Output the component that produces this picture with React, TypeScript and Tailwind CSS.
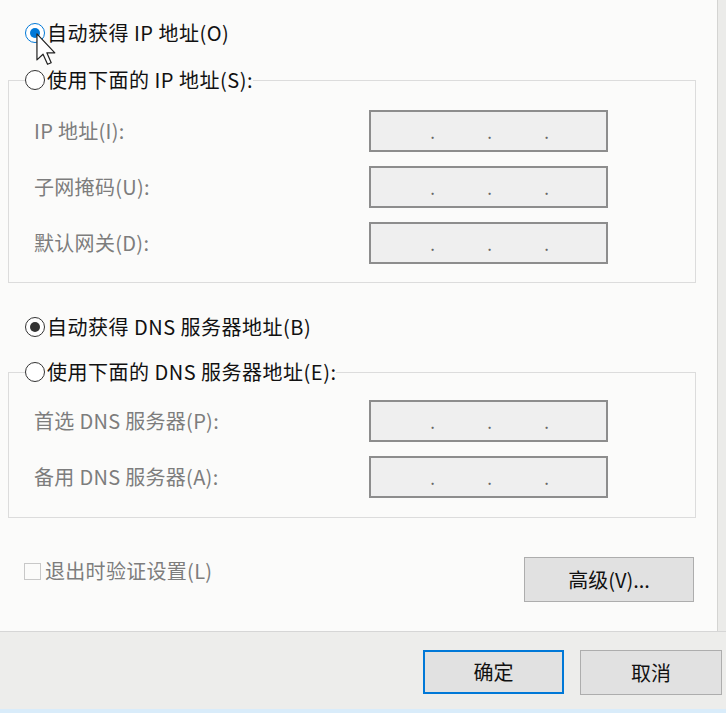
import React from 'react';

const font = { fontFamily: '"Noto Sans CJK SC", "Noto Sans", sans-serif' };

const Radio: React.FC<{ checked?: boolean; focus?: boolean }> = ({ checked, focus }) => {
  const ring = focus ? 'border-[#0078d7]' : 'border-[#333333]';
  const dot = focus ? 'bg-[#0078d7]' : 'bg-[#333333]';
  return (
    <span className={`flex h-[20px] w-[20px] shrink-0 items-center justify-center rounded-full border-[1.5px] bg-white ${ring}`}>
      {checked && <span className={`h-[10px] w-[10px] rounded-full ${dot}`} />}
    </span>
  );
};

const IpBox: React.FC = () => (
  <div className="h-[42px] w-[239px] border-2 border-[#8d8d8d] bg-[#efefef]">
    <div className="flex h-full items-center gap-[52px] pl-[59px] text-[17px] leading-none text-[#666]">
      <span className="w-[5px] text-center">.</span>
      <span className="w-[5px] text-center">.</span>
      <span className="w-[5px] text-center">.</span>
    </div>
  </div>
);

const Field: React.FC<{ label: string }> = ({ label }) => (
  <div className="flex items-center">
    <span className="w-[335px] text-[20px] tracking-[0.3px] text-[#7d7d7d]">{label}</span>
    <IpBox />
  </div>
);

const Cursor: React.FC = () => (
  <svg className="absolute left-[36px] top-[33px]" width="21" height="33" viewBox="0 0 12 19">
    <path d="M0.5 0.5 L0.5 15.5 L4 12.2 L6.6 18 L8.7 17.1 L6.2 11.4 L10.8 11.4 Z" fill="#fff" stroke="#222" strokeWidth="0.7" strokeLinejoin="round" />
  </svg>
);

export default function App() {
  return (
    <div className="relative flex h-[713px] w-[726px] flex-col overflow-hidden text-[#111]" style={font}>
      <div className="flex h-[632px] border-b border-[#d6d6d6]">
        <div className="w-[718px] border-r border-[#d4d4d2] bg-[#fbfbfa]">
          <div className="ml-[25px] mt-[20px] flex h-[26px] items-center gap-[2px] text-[20px] tracking-[0.5px]">
            <Radio checked focus />
            <span>自动获得 IP 地址(O)</span>
          </div>

          <fieldset className="ml-[8px] mt-[21px] w-[688px] border border-[#dcdcdc] pb-[18px]">
            <legend className="ml-[16px] flex h-[26px] items-center gap-[2px] text-[20px] tracking-[0.5px]">
              <Radio />
              <span>使用下面的 IP 地址(S):</span>
            </legend>
            <div className="mt-[17px] flex flex-col gap-[14px] pl-[25px]">
              <Field label="IP 地址(I):" />
              <Field label="子网掩码(U):" />
              <Field label="默认网关(D):" />
            </div>
          </fieldset>

          <div className="ml-[25px] mt-[31px] flex h-[26px] items-center gap-[2px] text-[20px] tracking-[0.5px]">
            <Radio checked />
            <span>自动获得 DNS 服务器地址(B)</span>
          </div>

          <fieldset className="ml-[8px] mt-[19px] w-[688px] border border-[#dcdcdc] pb-[19px]">
            <legend className="ml-[16px] flex h-[26px] items-center gap-[2px] text-[20px] tracking-[0.5px]">
              <Radio />
              <span>使用下面的 DNS 服务器地址(E):</span>
            </legend>
            <div className="mt-[15px] flex flex-col gap-[14px] pl-[25px]">
              <Field label="首选 DNS 服务器(P):" />
              <Field label="备用 DNS 服务器(A):" />
            </div>
          </fieldset>

          <div className="mt-[39px] flex items-start justify-between pl-[24px] pr-[23px]">
            <div className="mt-[1px] flex h-[26px] items-center gap-[4px] text-[20px] tracking-[0.3px] text-[#7d7d7d]">
              <span className="h-[17px] w-[17px] border border-[#c8c8c8] bg-[#fbfbfa]" />
              <span>退出时验证设置(L)</span>
            </div>
            <button className="h-[45px] w-[170px] border border-[#adadad] bg-[#e1e1e1] text-[20px]">高级(V)...</button>
          </div>
        </div>
        <div className="flex-1 bg-[#ebebe9]" />
      </div>

      <div className="flex flex-1 items-start justify-end gap-[16px] bg-[#ededeb] pr-[4px] pt-[18px]">
        <button className="h-[44px] w-[141px] border-2 border-[#0078d7] bg-[#e1e1e1] text-[20px]">确定</button>
        <button className="h-[45px] w-[142px] border border-[#adadad] bg-[#e1e1e1] text-[20px]">取消</button>
      </div>
      <div className="h-[4px] bg-[#d9ecfa]" />

      <Cursor />
    </div>
  );
}
